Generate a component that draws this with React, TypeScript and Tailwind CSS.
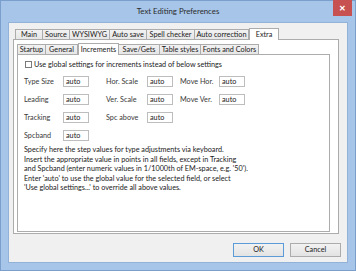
const OUTER_TABS = [
  { label: "Main", w: 28 },
  { label: "Source", w: 28 },
  { label: "WYSIWYG", w: 41 },
  { label: "Auto save", w: 38 },
  { label: "Spell checker", w: 49 },
  { label: "Auto correction", w: 55 },
  { label: "Extra", w: 30, active: true },
];

const INNER_TABS = [
  { label: "Startup", w: 29 },
  { label: "General", w: 33 },
  { label: "Increments", w: 41, active: true },
  { label: "Save/Gets", w: 42 },
  { label: "Table styles", w: 42 },
  { label: "Fonts and Colors", w: 59 },
];

const ROWS = [
  [
    { label: "Type Size", w: 39 },
    { label: "Hor. Scale", w: 41 },
    { label: "Move Hor.", w: 39 },
  ],
  [
    { label: "Leading", w: 39 },
    { label: "Ver. Scale", w: 41 },
    { label: "Move Ver.", w: 39 },
  ],
  [
    { label: "Tracking", w: 39 },
    { label: "Spc above", w: 41 },
  ],
  [{ label: "Spcband", w: 39 }],
];

function Tab({ label, w, active }: { label: string; w: number; active?: boolean }) {
  return (
    <div
      style={{ width: w }}
      className={
        active
          ? "relative z-10 -mb-px flex h-[12px] items-start justify-center whitespace-nowrap border border-b-0 border-[#acacac] bg-white pt-[2px]"
          : "-ml-px flex h-[10px] items-center justify-center whitespace-nowrap border border-b-0 border-[#acacac] bg-gradient-to-b from-[#f2f2f2] to-[#e6e6e6] first:ml-0"
      }
    >
      <span className="leading-none">{label}</span>
    </div>
  );
}

function Field({ label, w }: { label: string; w: number }) {
  return (
    <div className="flex items-center">
      <span style={{ width: w }} className="whitespace-nowrap leading-none text-[#3a3a3a]">
        {label}
      </span>
      <div className="flex h-[11px] w-[26px] items-center border border-[#bdbdbd] bg-white pl-[2px] leading-none">
        auto
      </div>
    </div>
  );
}

export default function App() {
  return (
    <div
      className="flex h-[271px] w-[356px] flex-col border border-[#7b9fcd] bg-[#a6c5e8] text-[7.25px] text-[#1a1a1a]"
      style={{ fontFamily: 'Lato, "Noto Sans", sans-serif' }}
    >
      {/* title bar */}
      <div className="relative flex h-[21px] items-center justify-center">
        <span className="text-[7.8px] leading-none text-[#2b2b2b]">Text Editing Preferences</span>
        <div className="absolute right-[3px] top-[-1px] flex h-[16px] w-[19px] items-center justify-center bg-[#c75050] text-[8px] font-bold text-white">
          ✕
        </div>
      </div>

      {/* client */}
      <div className="mx-[7px] flex h-[241px] flex-col border border-[#93b2d8] bg-[#f0f0f0]">
        <div className="flex flex-col pl-[4px] pr-[8px] pt-[5px]">
          <div className="flex items-end pl-[2px]">
            {OUTER_TABS.map((t) => (
              <Tab key={t.label} {...t} />
            ))}
          </div>
          <div className="flex h-[195px] flex-col border border-[#acacac] bg-white pb-[1px] pl-[3px] pr-[8px] pt-[3px]">
            <div className="flex items-end">
              {INNER_TABS.map((t) => (
                <Tab key={t.label} {...t} />
              ))}
            </div>
            <div className="flex flex-1 flex-col border border-[#acacac] bg-white pl-[6px] pt-[6px]">
              <div className="flex items-center gap-[2px] pl-[1px]">
                <div className="h-[7px] w-[7px] border border-[#7a7a7a] bg-white" />
                <span className="leading-none">Use global settings for increments instead of below settings</span>
              </div>
              <div className="mt-[8px] flex flex-col gap-[7px]">
                {ROWS.map((row, i) => (
                  <div key={i} className="flex items-center">
                    {row.map((f, j) => (
                      <div key={f.label} className={j === 1 ? "pl-[17px]" : j === 2 ? "pl-[7px]" : ""}>
                        <Field {...f} />
                      </div>
                    ))}
                  </div>
                ))}
              </div>
              <p className="mt-[4px] whitespace-nowrap leading-[9.5px]">
                Specify here the step values for type adjustments via keyboard.
                <br />
                Insert the appropriate value in points in all fields, except in Tracking
                <br />
                and Spcband (enter numeric values in 1/1000th of EM-space, e.g. '50').
                <br />
                Enter 'auto' to use the global value for the selected field, or select
                <br />
                'Use global settings...' to override all above values.
              </p>
            </div>
          </div>
        </div>
        <div className="mt-auto flex justify-end gap-[6px] pb-[5px] pr-[6px]">
          <div className="flex h-[14px] w-[51px] items-center justify-center border border-[#5b9bd8] bg-gradient-to-b from-[#f2f2f2] to-[#e3e3e3] leading-none">
            OK
          </div>
          <div className="flex h-[14px] w-[51px] items-center justify-center border border-[#acacac] bg-gradient-to-b from-[#f2f2f2] to-[#e3e3e3] leading-none">
            Cancel
          </div>
        </div>
      </div>
    </div>
  );
}
